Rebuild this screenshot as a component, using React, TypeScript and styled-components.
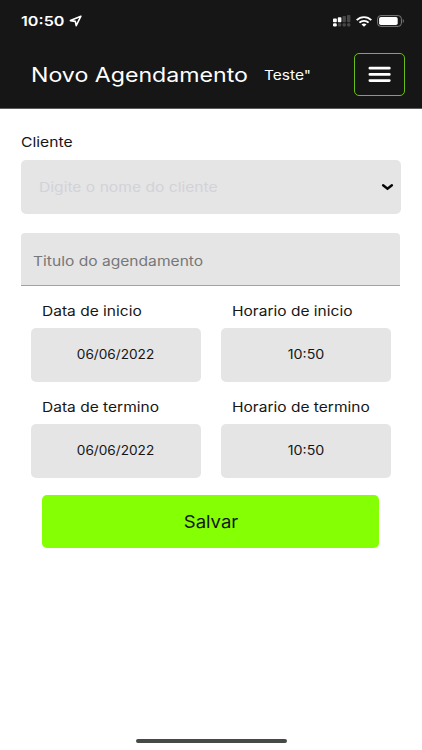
import React from "react";
import styled, { createGlobalStyle } from "styled-components";

const GlobalStyle = createGlobalStyle`
  * { box-sizing: border-box; }
  body {
    margin: 0;
    background: #fff;
    color: #161616;
    font-family: Inter, "Liberation Sans", sans-serif;
  }
  button { font-family: inherit; color: inherit; }
`;

const Screen = styled.div`
  width: 422px;
  height: 750px;
  display: flex;
  flex-direction: column;
  background: #fff;
  overflow: hidden;
`;

const Header = styled.header`
  flex: none;
  height: 109px;
  background: #161616;
  border-bottom: 1px solid #5c5c5c;
  color: #fff;
`;

const StatusBar = styled.div`
  height: 42px;
  padding: 0 17px 0 21px;
  display: flex;
  align-items: center;
`;

/* Wide lettering: the glyphs are stretched sideways from the given origin. */
const Wide = styled.span<{ $size: number; $stretch?: number; $origin?: string; $color?: string; $weight?: number }>`
  display: block;
  white-space: nowrap;
  line-height: 20px;
  font-size: ${(p) => p.$size}px;
  font-weight: ${(p) => p.$weight ?? 400};
  color: ${(p) => p.$color ?? "inherit"};
  transform: scaleX(${(p) => p.$stretch ?? 1.15});
  transform-origin: ${(p) => p.$origin ?? "left"} center;
`;

const Clock = styled.div`
  width: 48px;
`;

const StatusIcons = styled.div`
  margin-left: auto;
  display: flex;
  align-items: center;
  gap: 5px;
`;

const NavBar = styled.div`
  height: 65px;
  padding: 0 17px 0 30.5px;
  display: flex;
  align-items: center;
`;

const PageTitle = styled.div`
  width: 233.5px;
`;

const MenuButton = styled.button`
  margin-left: auto;
  width: 51px;
  height: 43px;
  padding: 0 0 1px;
  display: flex;
  align-items: center;
  justify-content: center;
  background: transparent;
  border: 1px solid #6cbc1c;
  border-radius: 5px;
`;

const Form = styled.main`
  flex: 1;
  padding: 23px 21px 0;
`;

const ClientSelect = styled.div`
  width: 380px;
  height: 54px;
  margin-top: 8px;
  padding: 0 7px 0 18px;
  display: flex;
  align-items: center;
  justify-content: space-between;
  background: #e5e5e5;
  border-radius: 5px;
`;

const TitleField = styled.div`
  width: 379px;
  height: 53px;
  margin-top: 19px;
  padding: 3px 12px 0;
  display: flex;
  align-items: center;
  background: #e5e5e5;
  border-bottom: 1px solid #a2a2a2;
  border-radius: 4px 4px 0 0;
`;

const DateGrid = styled.div`
  margin: 15px 10px 0;
  display: grid;
  grid-template-columns: 170px 170px;
  column-gap: 20px;
  row-gap: 14.6px;
`;

const LabelSlot = styled.div`
  padding-left: 10.8px;
  margin-bottom: 7px;
`;

const ValueBox = styled.div`
  height: 54px;
  display: flex;
  align-items: center;
  justify-content: center;
  background: #e5e5e5;
  border-radius: 5px;
`;

const SaveButton = styled.button`
  display: flex;
  align-items: center;
  justify-content: center;
  width: 337px;
  height: 53px;
  margin: 17px 0 0 21.4px;
  padding: 1px 0 0;
  border: 0;
  border-radius: 5px;
  background: #84ff04;
`;

const HomeIndicator = styled.div`
  flex: none;
  align-self: center;
  width: 151px;
  height: 4.5px;
  margin-bottom: 6.8px;
  border-radius: 3px;
  background: #464946;
`;

const LocationIcon = () => (
  <svg width="13" height="12" viewBox="0 0 13 12">
    <path d="M11.9 1.2 1.4 5.6l4.9.8.9 4.2z" fill="none" stroke="#fff" strokeWidth="1.6" strokeLinejoin="round" />
  </svg>
);

const SignalIcon = () => (
  <svg width="18" height="12" viewBox="0 0 18 12">
    <g fill="#fff">
      <rect x="0" y="3.6" width="3.8" height="3.6" rx=".8" />
      <rect x="4.8" y="2.2" width="3.6" height="5" rx=".8" />
      <rect x="0" y="8.2" width="3.8" height="3.2" rx="1.2" />
    </g>
    <g fill="#484848">
      <rect x="9.5" y="1" width="3.4" height="6.2" rx=".8" />
      <rect x="14" y="0" width="3.4" height="7.2" rx=".8" />
      <rect x="5" y="8.2" width="3.2" height="3.2" rx="1" />
      <rect x="9.6" y="8.2" width="3.2" height="3.2" rx="1" />
      <rect x="14.1" y="8.2" width="3.2" height="3.2" rx="1" />
    </g>
  </svg>
);

const WifiIcon = () => (
  <svg width="16" height="11" viewBox="0 0 16 11">
    <g fill="none" stroke="#fff" strokeWidth="1.9">
      <path d="M.7 4.2C4.6.1 11.4.1 15.3 4.2" />
      <path d="M3.4 6.7c2.5-2.5 6.7-2.5 9.2 0" />
    </g>
    <path d="M5.5 8.5c1.4-1.3 3.6-1.3 5 0L8 10.8z" fill="#fff" />
  </svg>
);

const BatteryIcon = () => (
  <svg width="28" height="12" viewBox="0 0 28 12">
    <rect x=".6" y=".6" width="23.8" height="10.8" rx="3.2" fill="none" stroke="#7c7c7c" strokeWidth="1" />
    <rect x="2.1" y="2" width="18.6" height="8" rx="1.8" fill="#fff" />
    <path d="M25.8 4v4c1.4-.6 1.4-3.4 0-4z" fill="#7c7c7c" />
  </svg>
);

const MenuIcon = () => (
  <svg width="23" height="17" viewBox="0 0 23 17">
    <path d="M1.9 2.2h19.4M1.9 8.4h19.4M1.9 14.6h19.4" stroke="#fff" strokeWidth="2.8" strokeLinecap="round" />
  </svg>
);

const ChevronIcon = () => (
  <svg width="13" height="8" viewBox="0 0 13 8">
    <path d="M2.1 2.2 6.5 5.7l4.4-3.5" fill="none" stroke="#060606" strokeWidth="2.4" strokeLinecap="round" strokeLinejoin="miter" />
  </svg>
);

interface Slot {
  label: string;
  value: string;
  isDate: boolean;
}

const slots: Slot[] = [
  { label: "Data de inicio", value: "06/06/2022", isDate: true },
  { label: "Horario de inicio", value: "10:50", isDate: false },
  { label: "Data de termino", value: "06/06/2022", isDate: true },
  { label: "Horario de termino", value: "10:50", isDate: false },
];

export default function App() {
  return (
    <>
      <GlobalStyle />
      <Screen>
        <Header>
          <StatusBar>
            <Clock>
              <Wide $size={13.7} $stretch={1.18} $weight={600}>10:50</Wide>
            </Clock>
            <LocationIcon />
            <StatusIcons>
              <SignalIcon />
              <WifiIcon />
              <BatteryIcon />
            </StatusIcons>
          </StatusBar>
          <NavBar>
            <PageTitle>
              <Wide $size={20} $stretch={1.157}>Novo Agendamento</Wide>
            </PageTitle>
            <Wide $size={13.5}>Teste"</Wide>
            <MenuButton aria-label="Menu">
              <MenuIcon />
            </MenuButton>
          </NavBar>
        </Header>
        <Form>
          <Wide $size={13.5} $stretch={1.16}>Cliente</Wide>
          <ClientSelect>
            <Wide $size={13.5} $stretch={1.157} $color="#d2d2d9">Digite o nome do cliente</Wide>
            <ChevronIcon />
          </ClientSelect>
          <TitleField>
            <Wide $size={13.5} $stretch={1.155} $color="#777">Titulo do agendamento</Wide>
          </TitleField>
          <DateGrid>
            {slots.map((slot) => (
              <div key={slot.label}>
                <LabelSlot>
                  <Wide $size={13.5}>{slot.label}</Wide>
                </LabelSlot>
                <ValueBox>
                  <Wide $size={12.5} $stretch={slot.isDate ? 1.09 : 1.14} $origin="center">{slot.value}</Wide>
                </ValueBox>
              </div>
            ))}
          </DateGrid>
          <SaveButton>
            <Wide $size={17} $stretch={1.09} $origin="center">Salvar</Wide>
          </SaveButton>
        </Form>
        <HomeIndicator />
      </Screen>
    </>
  );
}
